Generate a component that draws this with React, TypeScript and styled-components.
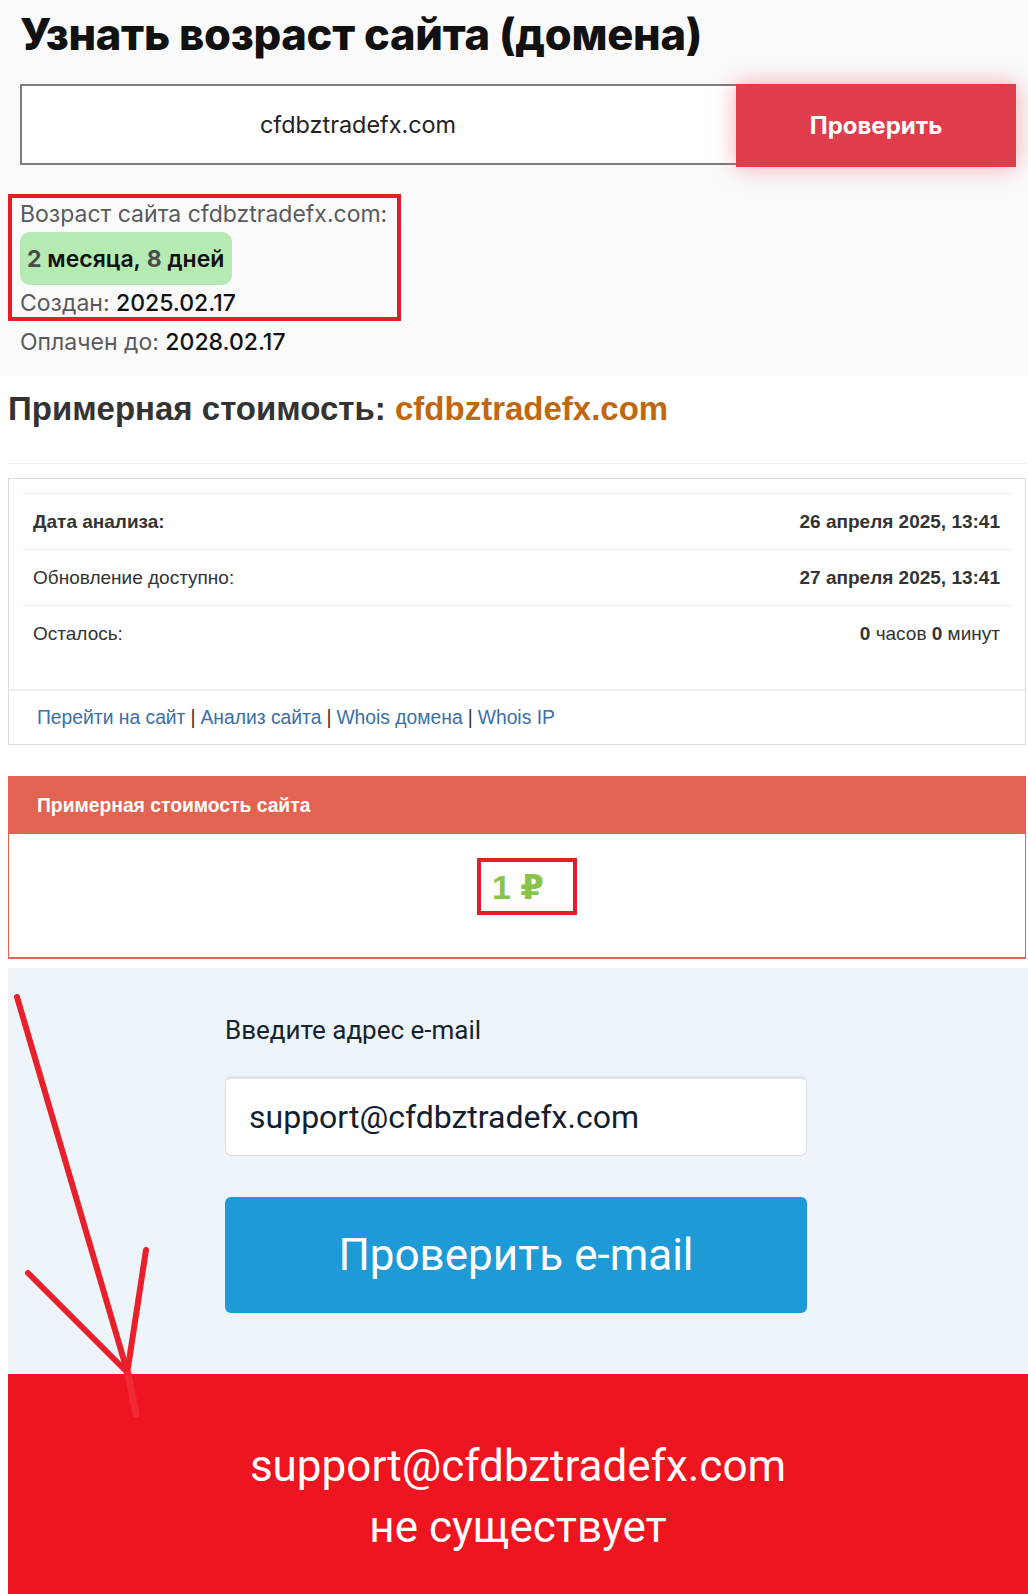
import React from "react";
import styled, {createGlobalStyle} from "styled-components";

const GlobalStyle = createGlobalStyle`
    html, body {
        margin: 0;
        padding: 0;
        background: #ffffff;
    }

    * {
        box-sizing: border-box;
    }
`

const Page = styled.div`
    position: relative;
    width: 1028px;
    min-height: 1594px;
    overflow: hidden;
`

/* --- возраст домена --- */

const AgeSection = styled.section`
    background: #fafafa;
    padding: 4px 12px 20px 20px;
    font-family: Inter, "Noto Sans", sans-serif;
`

const Title = styled.h1`
    margin: 0;
    font-size: 43.5px;
    line-height: 60px;
    font-weight: 800;
    color: #111;
    letter-spacing: -0.3px;
`

const CheckForm = styled.div`
    display: flex;
    align-items: flex-start;
    margin-top: 20px;
`

const DomainInput = styled.div`
    width: 716px;
    height: 81px;
    padding-right: 42px;
    border: 2px solid #7c7c7c;
    border-right: none;
    background: #fff;
    display: flex;
    align-items: center;
    justify-content: center;
    font-size: 23.4px;
    color: #222;
`

const CheckButton = styled.button`
    width: 280px;
    height: 83px;
    border: none;
    background: #e03d4c;
    color: #fff;
    font-family: Inter, "Noto Sans", sans-serif;
    font-size: 24px;
    font-weight: 700;
    box-shadow: 0 0 22px rgba(232, 70, 82, 0.45);
`

const AgeBox = styled.div`
    display: inline-flex;
    flex-direction: column;
    align-items: flex-start;
    margin: 27px 0 0 -12px;
    padding: 2px 10px 0 8px;
    border: 4px solid #e31e24;
`

const InfoLine = styled.div<{ $gap?: number }>`
    font-size: 23px;
    line-height: 28px;
    color: #5a5a5a;
    margin-top: ${p => p.$gap || 0}px;

    b {
        font-weight: 500;
        color: #111;
    }
`

const AgeBadge = styled.div`
    display: inline-flex;
    align-items: center;
    height: 53px;
    margin-top: 4px;
    padding: 0 8px 0 7px;
    border-radius: 10px;
    background: #b5eab3;
    font-size: 23px;
    font-weight: 600;
    color: #111;

    b {
        color: #4a4a4a;
        font-weight: 700;
    }
`

const PaidLine = styled(InfoLine)`
    margin-top: 7px;
`

/* --- стоимость --- */

const CostSection = styled.section`
    padding: 13px 2px 0 8px;
    font-family: "Liberation Sans", Arial, "DejaVu Sans", sans-serif;
`

const CostTitle = styled.h2`
    margin: 0;
    font-size: 33px;
    line-height: 40px;
    font-weight: 700;
    color: #333;

    span {
        color: #c1670f;
    }
`

const Divider = styled.hr`
    margin: 34px 0 0 0;
    border: none;
    border-top: 1px solid #eeeeee;
`

const InfoBox = styled.div`
    margin-top: 14px;
    border: 1px solid #dddddd;
    background: #fff;
`

const InfoTable = styled.div`
    padding: 14px 14px 28px 14px;
`

const InfoRow = styled.div`
    display: flex;
    justify-content: space-between;
    align-items: center;
    height: 56px;
    padding: 0 11px 0 10px;
    border-top: 1px solid #eeeeee;
    font-size: 19px;
    color: #333;
`

const RowLabel = styled.span<{ $bold?: boolean }>`
    font-weight: ${p => (p.$bold ? 700 : 400)};
`

const RowValue = styled.span`
    b {
        font-weight: 700;
    }
`

const LinksBar = styled.div`
    height: 55px;
    border-top: 2px solid #eeeeee;
    display: flex;
    align-items: center;
    padding-left: 28px;
    font-size: 19.3px;
    color: #333;

    a {
        color: #3a6fa8;
        text-decoration: none;
    }
`

const Sep = styled.span`
    margin: 0 5px;
`

const PricePanel = styled.div`
    margin-top: 31px;
    border: 1px solid #e36352;
    border-bottom-width: 2px;
`

const PanelHeader = styled.div`
    height: 57px;
    background: #e36352;
    color: #fff;
    font-size: 19.3px;
    font-weight: 700;
    display: flex;
    align-items: center;
    padding-left: 28px;
`

const PanelBody = styled.div`
    display: flex;
    justify-content: center;
    padding: 24px 0 42px 0;
    background: #fff;
`

const PriceMark = styled.div`
    height: 57px;
    margin-left: 20px;
    padding: 0 29px 0 11px;
    border: 4px solid #e31e24;
    display: flex;
    align-items: center;
    font-size: 34px;
    font-weight: 700;
    color: #8bc34a;
`

/* --- проверка e-mail --- */

const EmailSection = styled.section`
    margin: 9px 0 0 8px;
    background: #eef5fa;
    padding: 45px 0 61px 217px;
    font-family: Roboto, "Noto Sans", sans-serif;
`

const EmailLabel = styled.div`
    font-size: 26px;
    line-height: 34px;
    color: #17232e;
`

const EmailField = styled.div`
    width: 582px;
    height: 80px;
    margin-top: 29px;
    padding-left: 23px;
    display: flex;
    align-items: center;
    background: #fff;
    border: 1px solid #dcdfe2;
    border-top: 3px solid #e2e4e6;
    border-radius: 6px;
    font-size: 32px;
    color: #102030;
`

const EmailButton = styled.button`
    width: 582px;
    height: 116px;
    margin-top: 41px;
    border: none;
    border-radius: 6px;
    background: #1e9ad6;
    color: #fff;
    font-family: Roboto, "Noto Sans", sans-serif;
    font-size: 44px;
`

const ResultSection = styled.section`
    margin-left: 8px;
    min-height: 221px;
    background: #ee1520;
    padding-top: 62px;
    text-align: center;
    font-family: Roboto, "Noto Sans", sans-serif;
    font-size: 44px;
    line-height: 61px;
    color: #fff;
`

const ArrowLayer = styled.svg`
    position: absolute;
    left: 0;
    top: 0;
    pointer-events: none;
`

export default function App() {
    return (
        <Page>
            <GlobalStyle/>
            <AgeSection>
                <Title>Узнать возраст сайта (домена)</Title>
                <CheckForm>
                    <DomainInput>cfdbztradefx.com</DomainInput>
                    <CheckButton>Проверить</CheckButton>
                </CheckForm>
                <AgeBox>
                    <InfoLine>Возраст сайта cfdbztradefx.com:</InfoLine>
                    <AgeBadge><b>2</b>&nbsp;месяца,&nbsp;<b>8</b>&nbsp;дней</AgeBadge>
                    <InfoLine $gap={4}>Создан: <b>2025.02.17</b></InfoLine>
                </AgeBox>
                <PaidLine>Оплачен до: <b>2028.02.17</b></PaidLine>
            </AgeSection>

            <CostSection>
                <CostTitle>Примерная стоимость: <span>cfdbztradefx.com</span></CostTitle>
                <Divider/>
                <InfoBox>
                    <InfoTable>
                        <InfoRow>
                            <RowLabel $bold>Дата анализа:</RowLabel>
                            <RowValue><b>26 апреля 2025, 13:41</b></RowValue>
                        </InfoRow>
                        <InfoRow>
                            <RowLabel>Обновление доступно:</RowLabel>
                            <RowValue><b>27 апреля 2025, 13:41</b></RowValue>
                        </InfoRow>
                        <InfoRow>
                            <RowLabel>Осталось:</RowLabel>
                            <RowValue><b>0</b> часов <b>0</b> минут</RowValue>
                        </InfoRow>
                    </InfoTable>
                    <LinksBar>
                        <a href="#">Перейти на сайт</a><Sep>|</Sep>
                        <a href="#">Анализ сайта</a><Sep>|</Sep>
                        <a href="#">Whois домена</a><Sep>|</Sep>
                        <a href="#">Whois IP</a>
                    </LinksBar>
                </InfoBox>
                <PricePanel>
                    <PanelHeader>Примерная стоимость сайта</PanelHeader>
                    <PanelBody>
                        <PriceMark>1 ₽</PriceMark>
                    </PanelBody>
                </PricePanel>
            </CostSection>

            <EmailSection>
                <EmailLabel>Введите адрес e-mail</EmailLabel>
                <EmailField>support@cfdbztradefx.com</EmailField>
                <EmailButton>Проверить e-mail</EmailButton>
            </EmailSection>
            <ResultSection>
                <div>support@cfdbztradefx.com</div>
                <div>не существует</div>
            </ResultSection>

            <ArrowLayer width="1028" height="1594" viewBox="0 0 1028 1594">
                <g stroke="#e8202a" strokeWidth="6" strokeLinecap="round" fill="none">
                    <line x1="17" y1="997" x2="128" y2="1374"/>
                    <line x1="28" y1="1273" x2="127" y2="1372"/>
                    <line x1="146" y1="1250" x2="127" y2="1374"/>
                </g>
                <line x1="128" y1="1374" x2="136" y2="1414" stroke="#f02a30" strokeWidth="7" strokeLinecap="round"/>
            </ArrowLayer>
        </Page>
    );
}
